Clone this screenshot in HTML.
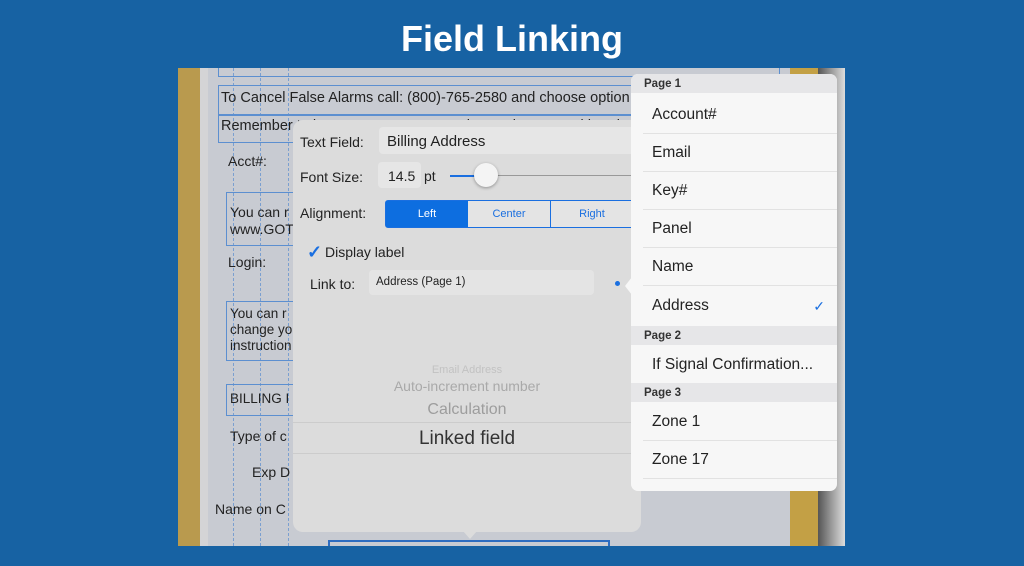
<!DOCTYPE html>
<html><head><style>
body{margin:0;width:1024px;height:566px;background:#1762a3;font-family:"Liberation Sans",sans-serif;position:relative;overflow:hidden}
.a{position:absolute}
.t{color:#222;font-size:14px;white-space:nowrap}
.box{position:absolute;border:1px solid #5c8fd0}
.row{position:absolute;left:12px;right:0;height:38px;border-bottom:1px solid #e2e2e2;font-size:15.5px;color:#222;line-height:40px;padding-left:9px}
.hd{position:absolute;left:0;right:0;height:19px;background:#e6e6e8;font-size:11.5px;font-weight:bold;color:#333;padding-left:13px;line-height:20px}
</style></head><body>
<div class="a" style="left:0;top:0;width:1024px;height:68px;color:#fff;font-weight:bold;font-size:36px;text-align:center;line-height:78px">Field Linking</div>
<div class="a" style="left:178px;top:68px;width:667px;height:478px;background:#c8cbd2;overflow:hidden">
 <div class="a" style="left:0;top:0;width:22px;height:478px;background:#b99a4e"></div>
 <div class="a" style="left:22px;top:0;width:8px;height:478px;background:#d4d4d6"></div>
 <div class="a" style="left:612px;top:0;width:28px;height:478px;background:#c3a045"></div>
 <div class="a" style="left:640px;top:0;width:27px;height:478px;background:linear-gradient(90deg,#555,#9a9a9a,#ddd)"></div>
 <div class="a" style="left:55px;top:0;width:1px;height:478px;border-left:1px dashed #7a9fd0"></div>
 <div class="a" style="left:82px;top:0;width:1px;height:478px;border-left:1px dashed #7a9fd0"></div>
 <div class="a" style="left:110px;top:0;width:1px;height:478px;border-left:1px dashed #7a9fd0"></div>
 <div class="box" style="left:40px;top:-5px;width:560px;height:12px"></div>
 <div class="box" style="left:40px;top:17px;width:560px;height:28px"></div>
 <div class="t a" style="left:43px;top:22px;font-size:14.5px">To Cancel False Alarms call: (800)-765-2580 and choose option</div>
 <div class="box" style="left:40px;top:47px;width:560px;height:26px"></div>
 <div class="t a" style="left:43px;top:50px;font-size:14.5px">Remember to have your Account Number and Password handy</div>
 <div class="t a" style="left:50px;top:85px">Acct#:</div>
 <div class="box" style="left:48px;top:124px;width:80px;height:52px"></div>
 <div class="t a" style="left:52px;top:136px;line-height:17px">You can r<br>www.GOT</div>
 <div class="t a" style="left:50px;top:186px">Login:</div>
 <div class="box" style="left:48px;top:233px;width:80px;height:58px"></div>
 <div class="t a" style="left:52px;top:238px;line-height:16px;font-size:13.5px">You can r<br>change yo<br>instruction</div>
 <div class="box" style="left:48px;top:316px;width:80px;height:30px"></div>
 <div class="t a" style="left:52px;top:323px;font-size:13.5px">BILLING I</div>
 <div class="t a" style="left:52px;top:360px">Type of c</div>
 <div class="t a" style="left:74px;top:396px">Exp D</div>
 <div class="t a" style="left:37px;top:433px">Name on C</div>
 <div class="box" style="left:150px;top:472px;width:278px;height:20px;border-width:2px;border-color:#2d6cc0"></div>
</div>
<!-- left popover -->
<div class="a" style="left:293px;top:120px;width:348px;height:412px;background:#dcdcdc;border-radius:10px;overflow:hidden">
 <div class="t a" style="left:7px;top:14px;font-size:14px">Text Field:</div>
 <div class="a" style="left:86px;top:7px;width:262px;height:27px;background:#e6e6e6;border-radius:4px"></div>
 <div class="t a" style="left:94px;top:13px;font-size:15px">Billing Address</div>
 <div class="t a" style="left:7px;top:49px">Font Size:</div>
 <div class="a" style="left:85px;top:42px;width:43px;height:26px;background:#e6e6e6;border-radius:4px"></div>
 <div class="t a" style="left:95px;top:48px">14.5</div>
 <div class="t a" style="left:131px;top:48px">pt</div>
 <div class="a" style="left:157px;top:55px;width:40px;height:2px;background:#1a6fe0"></div>
 <div class="a" style="left:197px;top:55px;width:160px;height:1px;background:#999"></div>
 <div class="a" style="left:181px;top:43px;width:24px;height:24px;border-radius:50%;background:#f4f4f4;box-shadow:0 1px 3px rgba(0,0,0,.35)"></div>
 <div class="t a" style="left:7px;top:85px">Alignment:</div>
 <div class="a" style="left:92px;top:80px;width:260px;height:26px;border:1px solid #1a6fe0;border-radius:3px;background:#e4e4e4;font-size:11px;color:#1a6fe0">
  <div class="a" style="left:0;top:0;width:82px;height:26px;background:#0d6ee0;color:#fff;text-align:center;line-height:26px">Left</div>
  <div class="a" style="left:82px;top:0;width:82px;height:26px;border-right:1px solid #1a6fe0;text-align:center;line-height:26px">Center</div>
  <div class="a" style="left:165px;top:0;width:82px;height:26px;text-align:center;line-height:26px">Right</div>
 </div>
 <div class="a" style="left:14px;top:122px;color:#1a6fe0;font-size:18px;font-weight:bold">✓</div>
 <div class="t a" style="left:32px;top:124px">Display label</div>
 <div class="t a" style="left:17px;top:156px">Link to:</div>
 <div class="a" style="left:76px;top:150px;width:225px;height:25px;background:#e4e4e4;border-radius:4px"></div>
 <div class="t a" style="left:83px;top:156px;font-size:11.5px">Address (Page 1)</div>
 <div class="a" style="left:322px;top:161px;width:5px;height:5px;background:#1a6fe0;border-radius:50%"></div>
 <div class="a" style="left:0;width:348px;top:244px;text-align:center;font-size:11px;color:#c2c2c2">Email Address</div>
 <div class="a" style="left:0;width:348px;top:258px;text-align:center;font-size:14px;color:#a9a9a9">Auto-increment number</div>
 <div class="a" style="left:0;width:348px;top:281px;text-align:center;font-size:16px;color:#9d9d9d">Calculation</div>
 <div class="a" style="left:0;width:348px;top:302px;height:30px;border-top:1px solid #ccc;border-bottom:1px solid #ccc;text-align:center;font-size:19px;color:#333;line-height:32px">Linked field</div>
</div>
<div class="a" style="left:463px;top:531px;width:0;height:0;border-left:7px solid transparent;border-right:7px solid transparent;border-top:8px solid #dcdcdc"></div>
<!-- right list -->
<div class="a" style="left:631px;top:74px;width:206px;height:417px;background:#f7f7f7;border-radius:7px;overflow:hidden">
 <div class="hd" style="top:0">Page 1</div>
 <div class="row" style="top:21px">Account#</div>
 <div class="row" style="top:59px">Email</div>
 <div class="row" style="top:97px">Key#</div>
 <div class="row" style="top:135px">Panel</div>
 <div class="row" style="top:173px">Name</div>
 <div class="row" style="top:212px;border:none">Address<span style="position:absolute;right:12px;color:#1a6fe0;font-size:14px">✓</span></div>
 <div class="hd" style="top:252px">Page 2</div>
 <div class="row" style="top:271px;border:none">If Signal Confirmation...</div>
 <div class="hd" style="top:309px">Page 3</div>
 <div class="row" style="top:328px">Zone 1</div>
 <div class="row" style="top:366px">Zone 17</div>
</div>
<div class="a" style="left:625px;top:277px;width:0;height:0;border-top:9px solid transparent;border-bottom:9px solid transparent;border-right:7px solid #f7f7f7"></div>
</body></html>
